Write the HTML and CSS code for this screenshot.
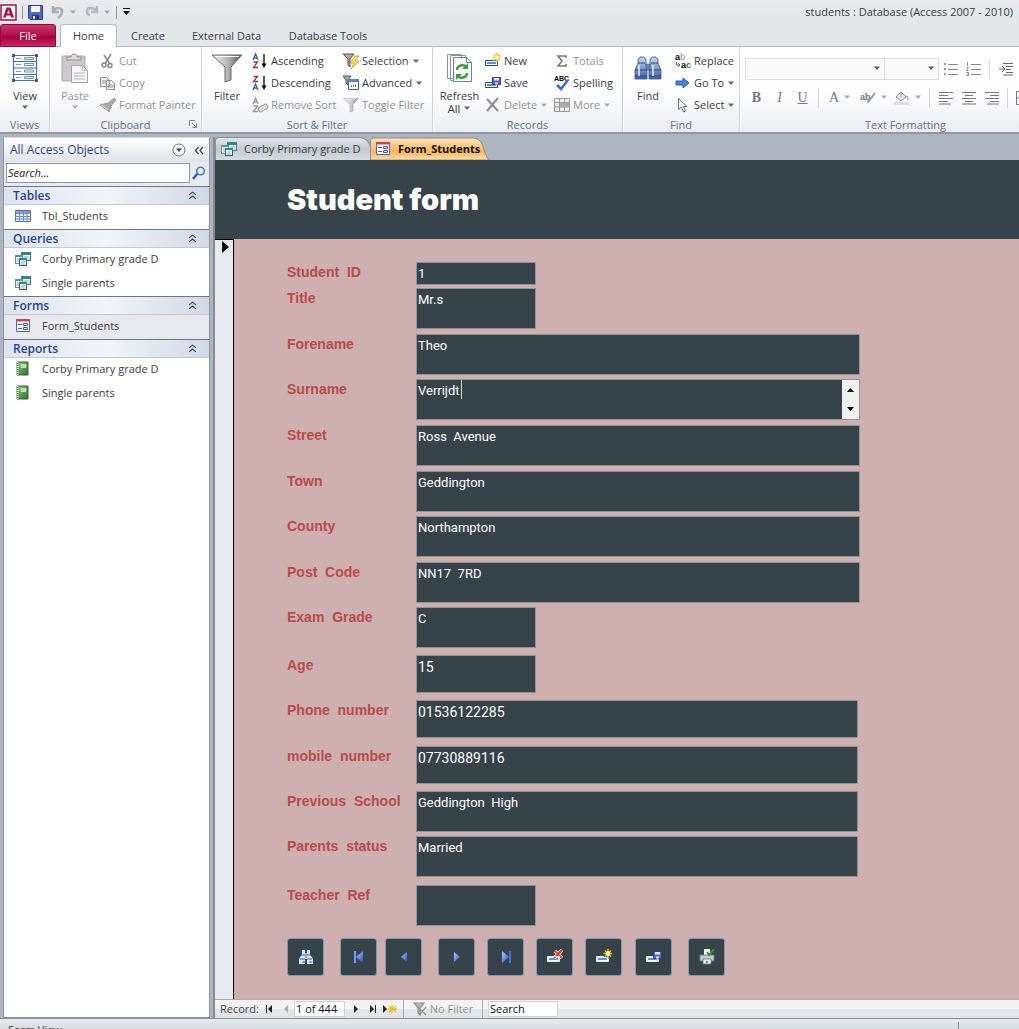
FILE: index.html
```html
<!DOCTYPE html>
<html lang="en">
<head>
<meta charset="utf-8">
<title>students : Database (Access 2007 - 2010)</title>
<link rel="stylesheet" href="styles.css">
</head>
<body>
<svg class="defs" aria-hidden="true">
  <defs>
    <linearGradient id="gFunnel"><stop offset="0" stop-color="#eee"/><stop offset=".5" stop-color="#bbb"/><stop offset="1" stop-color="#555"/></linearGradient>
    <linearGradient id="gBlue" x2="0" y2="1"><stop offset="0" stop-color="#c6d8f5"/><stop offset="1" stop-color="#3f5f9e"/></linearGradient>
    <linearGradient id="gGreen" x2="1" y2="1"><stop offset="0" stop-color="#8ccb83"/><stop offset="1" stop-color="#2f6d2c"/></linearGradient>
    <linearGradient id="gNav" x2="1" y2="1"><stop offset="0" stop-color="#b5ccff"/><stop offset="1" stop-color="#2149cf"/></linearGradient>
  </defs>
  <symbol id="query" viewBox="0 0 16 16"><rect x="6.500" y="1.500" width="9" height="8" fill="#fff" stroke="#4a7392"/><path d="M6 1h10v3H6z" fill="#2b8a87"/><rect x=".5" y="4.500" width="7" height="8" fill="#fff" stroke="#6687a4"/><path d="M0 4h8v2H0z" fill="#4a9c99"/><rect x="4.500" y="7.500" width="7" height="7" fill="#fff" stroke="#305a80"/><path d="M4 7h8v2H4z" fill="#2b8a87"/><path d="M6 11h4M6 13h4M2 8h2M2 10h2M9 6h5M13 8h2" stroke="#7da3c4"/></symbol>
  <symbol id="form" viewBox="0 0 16 16"><path d="M1.500 1.500h13v12h-13z" fill="#fff" stroke="#4a62ad"/><path d="M1 1h14v2.500H1z" fill="#c74465"/><path d="M3 6.500h4M3 10.500h4" stroke="#3e58ad"/><path d="M8.500 5.500h4v2h-4zM8.500 9.500h4v2h-4z" fill="#dce6fb" stroke="#3e58ad"/></symbol>
  <symbol id="table" viewBox="0 0 16 16"><path d="M.5 2.500h15v11H.5z" fill="#eff5ff" stroke="#50699e"/><path d="M1 3h14v2H1z" fill="#8aa6de"/><path d="M0 5.500h16M0 8.500h16M0 11h16M4.500 3v11M8.500 3v11M12 3v11" stroke="#7089b8"/></symbol>
  <symbol id="report" viewBox="0 0 16 16"><path d="M2 1h11v13H2z" fill="url(#gGreen)" stroke="#34632f"/><path d="M6 3.500h5v3H6z" fill="#b8e2ae" stroke="#e2f5de" stroke-width=".6"/><path d="M2.500 1v13" stroke="#dfe9dd" stroke-width="2" stroke-dasharray="1 1"/></symbol>
  <symbol id="funnel" viewBox="0 0 32 30"><path d="M1 2h30L20 14v13l-6 2V14z" fill="url(#gFunnel)" stroke="#6a6a6a"/><path d="M4 3.500h24" stroke="#fff"/></symbol>
  <symbol id="record" viewBox="0 0 16 16"><path d="M.5 7.500h12v5H.5z" fill="#fff" stroke="#26488c"/><path d="M2 9h9v2H2z" fill="#5490e8"/></symbol>
  <symbol id="recordnew" viewBox="0 0 16 16"><use href="#record"/><path d="M12 0v9M7.500 4.500h9M9 1.500l6 6M15 1.500l-6 6" stroke="#e8bd25" stroke-width="1.500"/><circle cx="12" cy="4.500" r="2.200" fill="#fff69b"/></symbol>
  <symbol id="recordsave" viewBox="0 0 16 16"><use href="#record"/><path d="M7.500 2.500h8v7h-8z" fill="#5d61b7" stroke="#343b83"/><path d="M9 3h5v2.500H9zM10 7.500h3v2h-3z" fill="#dfe3ff"/></symbol>
  <symbol id="recorddel" viewBox="0 0 16 16"><use href="#record"/><path d="M8 2l7 7M15 1L7 9" stroke="#fff" stroke-width="3.500"/><path d="M8 2l7 7M15 1L7 9" stroke="#e33d26" stroke-width="2"/></symbol>
  <symbol id="binoc" viewBox="0 0 28 26"><path d="M6 2h4l1 2h1v5l1 3v12H1V15L4 8V4h1zM22 2h-4l-1 2h-1v5l-1 3v12h12V15l-3-7V4h-1z" fill="url(#gBlue)" stroke="#3b5584" stroke-width=".8"/><path d="M12 9h4v6h-4z" fill="#6b87b8" stroke="#344e7c" stroke-width=".6"/><path d="M4 8h7M17 8h7M1 15h12M15 15h12M1 21h12M15 21h12" stroke="#2d4677"/><path d="M5 10v11M19 10v11" stroke="#e6effd" stroke-width="1.500"/></symbol>
  <symbol id="chev" viewBox="0 0 8 8"><path d="M1 3.500L4 1l3 2.500M1 7l3-2.500L7 7" fill="none" stroke="#333f55"/></symbol>
  <symbol id="addrest" viewBox="0 0 8 5"><path d="M1 .5h6L4 4z" fill="currentColor"/></symbol>
  <symbol id="align" viewBox="0 0 16 14"><path d="M1 1.500h14M1 4.500h9M1 7.500h14M1 10.500h9M1 13h12" stroke="#777"/></symbol>
</svg>

<header class="titlebar">
  <svg class="applogo" viewBox="0 0 17 17" role="img" aria-label="Access"><path d="M1 1h15v15H1z" fill="#fff" stroke="#a81245" stroke-width="1.500"/><path d="M6.500 3.500h4L14 13.500h-3l-.7-2H6.500l-.7 2H3zM8.400 6L7.200 9.500h2.500z" fill="#a81245" fill-rule="evenodd"/></svg>
  <i class="qsep"></i>
  <button class="q" aria-label="Save"><svg width="15" height="15" viewBox="0 0 15 15"><path d="M.5.5h14v14H2L.5 13z" fill="#5365c5" stroke="#2c3b91"/><path d="M3 1h9v6H3z" fill="#f4f6ff"/><path d="M4 10h7v5H4z" fill="#293b80"/><path d="M5 11h2v3H5z" fill="#fff"/></svg></button>
  <button class="q undo" aria-label="Undo"><svg width="14" height="14" viewBox="0 0 14 14"><path d="M2 1v6h6M2.500 6C5 2 12 2 11 7c0 3-2 4-4 6" fill="none" stroke="#a7adb5" stroke-width="2.500"/></svg><svg class="dd" width="8" height="5"><use href="#addrest"/></svg></button>
  <button class="q" aria-label="Redo"><svg width="14" height="14" viewBox="0 0 14 14"><path d="M12 1v6H6M11.500 6C9 2 2 2 2 6c0 2 1 4 3 4" fill="none" stroke="#b3b8bf" stroke-width="2.500"/></svg><svg class="dd" width="8" height="5"><use href="#addrest"/></svg></button>
  <i class="qsep"></i>
  <button class="q" aria-label="Customize"><svg width="9" height="8" viewBox="0 0 9 8"><path d="M1 .5h7" stroke="#111"/><path d="M1 3h7L4.500 7z" fill="#111"/></svg></button>
  <span class="wintitle">students : Database (Access 2007 - 2010)</span>
</header>
<nav class="tabs" aria-label="Ribbon tabs">
  <button class="file">File</button><button class="tab on">Home</button><button class="tab t2">Create</button><button class="tab t3">External Data</button><button class="tab t4">Database Tools</button>
</nav>

<section class="ribbon" aria-label="Home">
  <div class="group g-views">
    <div class="tools"><button class="big"><svg width="26" height="28" viewBox="0 0 26 28"><path d="M1.500 1.500h23v25h-23zM1 7.500h24M1 14h24M1 20.500h24" fill="#f8fbff" stroke="#4a6ea5" stroke-width="1.200"/><path d="M12.500 3.500h9v2h-9zM12.500 9.500h9v2h-9zM12.500 16h9v2h-9zM12.500 22.500h9v2h-9z" fill="#fff" stroke="#6f90c2"/><path d="M4 4.500h5M4 10.500h5M4 17.500h5M4 23.500h5" stroke="#7d9aca"/><path d="M0 0h3v3H0zM23 0h3v3h-3zM0 25h3v3H0zM23 25h3v3h-3z" fill="#3a5a92"/></svg><span>View</span><svg class="dd" width="8" height="5"><use href="#addrest"/></svg></button></div>
    <h2>Views</h2>
  </div>
  <div class="group g-clip">
    <div class="tools">
      <button class="big" disabled><svg width="28" height="30" viewBox="0 0 28 30"><rect x="1" y="3" width="23" height="25" rx="1" fill="#ccc8cc" stroke="#aaa5aa"/><path d="M6 7V4h4c0-4 6-4 6 0h4v3z" fill="#dedede" stroke="#8d8d8d"/><path d="M10.500 12.500h11l5 5v12h-16z" fill="#f6f6f6" stroke="#a3a3a3"/><path d="M21.500 12.500v5h5M13 20h11M13 23h11M13 26h11" fill="none" stroke="#bbb"/></svg><span>Paste</span><svg class="dd" width="8" height="5"><use href="#addrest"/></svg></button>
      <div class="col c-clip">
        <button disabled><svg viewBox="0 0 16 16"><path d="M4 2l6 9M11 1L5 11" stroke="#8a8a8a" stroke-width="1.500"/><circle cx="4" cy="12" r="2" fill="none" stroke="#888" stroke-width="1.500"/><circle cx="10" cy="12.500" r="2" fill="none" stroke="#888" stroke-width="1.500"/></svg>Cut</button>
        <button disabled><svg viewBox="0 0 16 16"><path d="M.5 2.500h6l3 3v6h-9zM6.500 5.500h5l3 3v6h-8z" fill="#eee" stroke="#909090"/><path d="M2 6h4M2 8h4M8 10h5M8 12h5" stroke="#999"/></svg>Copy</button>
        <button disabled><svg viewBox="0 0 16 16"><path d="M14 1l2 2-5 6-3-3zM7 6l4 4-2 5-9-7z" fill="#aaa" stroke="#888" stroke-width=".7"/><path d="M2 8l6 5" stroke="#eee"/></svg>Format Painter</button>
      </div>
    </div>
    <h2>Clipboard</h2>
    <svg class="launcher" width="8" height="8" viewBox="0 0 8 8"><path d="M.5 6V.5H6M3 3l4 4M7.500 3.500v4h-4" fill="none" stroke="#888"/></svg>
  </div>
  <div class="group g-sort">
    <div class="tools">
      <button class="big"><svg width="32" height="30"><use href="#funnel"/></svg><span>Filter</span></button>
      <div class="col c-sort">
        <button><svg viewBox="0 0 16 16"><path d="M1 7l2.500-6L6 7M2 5h3" fill="none" stroke="#3c5fa8" stroke-width="1.300"/><path d="M1.500 9h4l-4 5.500h4.500" fill="none" stroke="#a02e3b" stroke-width="1.300"/><path d="M12 1v12" stroke="#000" stroke-width="1.300"/><path d="M9.500 10.500h5L12 15z"/></svg>Ascending</button>
        <button><svg viewBox="0 0 16 16"><path d="M1.500 1.500h4l-4 5h4.500" fill="none" stroke="#a02e3b" stroke-width="1.300"/><path d="M1 15l2.500-6L6 15M2 13h3" fill="none" stroke="#3c5fa8" stroke-width="1.300"/><path d="M12 1v12" stroke="#000" stroke-width="1.300"/><path d="M9.500 10.500h5L12 15z"/></svg>Descending</button>
        <button disabled><svg viewBox="0 0 16 16"><path d="M1 7l2.500-6L6 7M2 5h3M1.500 9h4l-4 5.500h4.500" fill="none" stroke="#999" stroke-width="1.300"/><rect x="6" y="8.500" width="10" height="5" rx="2" transform="rotate(-30 11 11)" fill="#ddd" stroke="#999"/></svg>Remove Sort</button>
      </div>
      <div class="col c-filter">
        <button><svg viewBox="0 0 16 16"><path d="M0 1h11L7 6v8L5 12V6z" fill="#aaa" stroke="#555"/><path d="M12 3L7 10h4l-3 6 8-8h-4l4-5z" fill="#ffe164" stroke="#b98e1e" stroke-width=".7"/></svg>Selection<svg class="dd" viewBox="0 0 8 5"><use href="#addrest"/></svg></button>
        <button><svg viewBox="0 0 16 16"><path d="M0 1h8L5 5v5L3 8V5z" fill="#aaa" stroke="#555"/><path d="M5.500 5.500h10v9h-10z" fill="#fff" stroke="#365fa8"/><path d="M5 4h11v3H5z" fill="#4b83da"/><path d="M8 11h1M10 11h1M12 11h1" stroke="#27477e" stroke-width="1.500"/></svg>Advanced<svg class="dd" viewBox="0 0 8 5"><use href="#addrest"/></svg></button>
        <button disabled><svg viewBox="0 0 32 32"><use href="#funnel" opacity=".65"/></svg>Toggle Filter</button>
      </div>
    </div>
    <h2>Sort &amp; Filter</h2>
  </div>
  <div class="group g-rec">
    <div class="tools">
      <button class="big refresh"><svg width="27" height="30" viewBox="0 0 27 30"><path d="M1.500 1.500h14v24h-14zM4.500 2.500h15v25h-15z" fill="#fff" stroke="#8192ac"/><path d="M7.500 4.500h13l5 5v19h-18z" fill="#fff" stroke="#6b7e9c"/><path d="M20.500 4.500v5h5" fill="none" stroke="#6b7e9c"/><path d="M11 17c0-5 7-6 9-3M21 20c0 5-7 6-9 3" fill="none" stroke="#37a338" stroke-width="2.500"/><path d="M22 10v6h-6zM10 27v-6h6z" fill="#37a338"/></svg><span>Refresh<br>All <svg class="dd" width="8" height="5"><use href="#addrest"/></svg></span></button>
      <div class="col c-rec">
        <button><svg viewBox="0 0 16 16"><use href="#recordnew"/></svg>New</button>
        <button><svg viewBox="0 0 16 16"><use href="#recordsave"/></svg>Save</button>
        <button disabled><svg viewBox="0 0 16 16"><path d="M2 2l11 12M13 1L2 14" stroke="#8c8c8c" stroke-width="2"/></svg>Delete<svg class="dd" viewBox="0 0 8 5"><use href="#addrest"/></svg></button>
      </div>
      <div class="col c-tot">
        <button disabled><svg viewBox="0 0 16 16"><path d="M12 5V3H4l4 5-4 5h8v-2" fill="none" stroke="#777" stroke-width="1.500"/></svg>Totals</button>
        <button><svg viewBox="0 0 16 16"><text x="0" y="6" font-size="7" font-weight="700">ABC</text><path d="M3 10l4 4 7-9" fill="none" stroke="#3c6cc7" stroke-width="2.500"/></svg>Spelling</button>
        <button disabled><svg viewBox="0 0 16 16"><path d="M.5 1.500h15v13H.5z" fill="#eee" stroke="#999"/><path d="M0 5.500h16M0 10h16M5.500 1v13M10.500 1v13" stroke="#999"/><path d="M6 6h9v4H6z" fill="#aaa"/></svg>More<svg class="dd" viewBox="0 0 8 5"><use href="#addrest"/></svg></button>
      </div>
    </div>
    <h2>Records</h2>
  </div>
  <div class="group g-find">
    <div class="tools">
      <button class="big"><svg width="28" height="30" viewBox="0 0 28 26"><use href="#binoc"/></svg><span>Find</span></button>
      <div class="col c-find">
        <button><svg viewBox="0 0 16 16"><text x="0" y="7" font-size="9" font-weight="700">a<tspan fill="#aaa">b</tspan></text><text x="6" y="15" font-size="9" font-weight="700">a<tspan fill="#22862c">c</tspan></text><path d="M1.500 9v3h3M3 10l2 2-2 2" fill="none" stroke="#3a68b4"/></svg>Replace</button>
        <button><svg viewBox="0 0 16 16"><path d="M1 6h7V3l6 5-6 5v-3H1z" fill="#4a83e2" stroke="#2f5bab"/></svg>Go To<svg class="dd" viewBox="0 0 8 5"><use href="#addrest"/></svg></button>
        <button><svg viewBox="0 0 16 16"><path d="M3.500 1.500v11l3-2.500 2 5 2-1-2-4.500h3.500z" fill="#fff" stroke="#4b6791"/></svg>Select<svg class="dd" viewBox="0 0 8 5"><use href="#addrest"/></svg></button>
      </div>
    </div>
    <h2>Find</h2>
  </div>
  <div class="group g-text">
    <div class="fmt">
      <button class="combo font" disabled aria-label="Font"><svg class="dd" viewBox="0 0 8 5"><use href="#addrest"/></svg></button><button class="combo size" disabled aria-label="Font size"><svg class="dd" viewBox="0 0 8 5"><use href="#addrest"/></svg></button>
      <button class="fb" disabled aria-label="Bullets"><svg viewBox="0 0 16 14"><path d="M5 2.500h10M5 7.500h10M5 12.500h10" stroke="#888"/><path d="M1 1h2v2H1zM1 6h2v2H1zM1 11h2v2H1z" fill="#999"/></svg></button>
      <button class="fb" disabled aria-label="Numbering"><svg viewBox="0 0 16 14"><path d="M5 2.500h10M5 7.500h10M5 12.500h10M1.500 0v4M.5 5.500h2l-2 3h2M.5 10.500h2v3h-2M1 12h1" fill="none" stroke="#888"/></svg></button>
      <i class="fsep"></i>
      <button class="fb" disabled aria-label="Indent"><svg viewBox="0 0 16 14"><path d="M1 7h5M5 1.500h10M8 4.500h7M8 7.500h5M8 10.500h7M5 13h10M4 4l3 3-3 3" fill="none" stroke="#666"/></svg></button>
    </div>
    <div class="fmt two">
      <button class="fb serif" disabled><b>B</b></button><button class="fb serif" disabled><em>I</em></button><button class="fb serif" disabled><u>U</u></button>
      <i class="fsep"></i>
      <button class="fb serif color" disabled>A<svg class="dd" viewBox="0 0 8 5"><use href="#addrest"/></svg></button>
      <button class="fb color" disabled aria-label="Highlight"><svg viewBox="0 0 16 14"><text x="0" y="9" font-size="9" font-weight="700" fill="#777">ab</text><path d="M15 2l-6 8-2 1" fill="none" stroke="#999" stroke-width="2"/></svg><svg class="dd" viewBox="0 0 8 5"><use href="#addrest"/></svg></button>
      <button class="fb color" disabled aria-label="Fill"><svg viewBox="0 0 16 14"><path d="M2 6l5-5 5 5-5 4zM7 1v5M12 5c2 0 2 2 2 4" fill="#eee" stroke="#888"/><path d="M0 11h15v3H0z" fill="#ddd"/></svg><svg class="dd" viewBox="0 0 8 5"><use href="#addrest"/></svg></button>
      <i class="fsep"></i>
      <button class="fb" disabled aria-label="Left"><svg viewBox="0 0 16 14"><use href="#align"/></svg></button><button class="fb" disabled aria-label="Center"><svg viewBox="0 0 16 14"><path d="M1 1.500h14M4 4.500h8M1 7.500h14M4 10.500h8M1 13h14" stroke="#777"/></svg></button><button class="fb" disabled aria-label="Right"><svg viewBox="0 0 16 14"><path d="M1 1.500h14M6 4.500h9M1 7.500h14M6 10.500h9M3 13h12" stroke="#777"/></svg></button>
      <i class="fsep"></i>
      <button class="fb" disabled aria-label="Gridlines"><svg viewBox="0 0 16 14"><path d="M.5.5h15v13H.5zM0 7h16M8 0v14" fill="none" stroke="#777"/></svg></button>
    </div>
    <h2>Text Formatting</h2>
  </div>
</section>

<main class="work">
  <aside class="pane">
    <div class="panehead"><h1>All Access Objects</h1><button aria-label="Filter objects"><svg width="14" height="14" viewBox="0 0 14 14"><circle cx="7" cy="7" r="6" fill="#f7f8fa" stroke="#6c7480"/><path d="M4 5.500h6L7 9z" fill="#444"/></svg></button><button class="shut" aria-label="Collapse pane"><svg width="10" height="9" viewBox="0 0 10 9"><path d="M4.500 1L1.500 4.500l3 3.500M9 1L6 4.500 9 8" fill="none" stroke="#3d4654" stroke-width="1.300"/></svg></button></div>
    <div class="panesearch"><input type="text" placeholder="Search..." aria-label="Search objects"><button aria-label="Search"><svg width="14" height="14" viewBox="0 0 14 14"><path d="M1 13l5-6" stroke="#2d5fb8" stroke-width="2.500"/><circle cx="8.500" cy="5" r="3.800" fill="#e8f4ff" stroke="#3c7bd0" stroke-width="1.500"/></svg></button></div>
    <h3>Tables<svg><use href="#chev"/></svg></h3>
    <a href="#"><svg><use href="#table"/></svg>Tbl_Students</a>
    <h3>Queries<svg><use href="#chev"/></svg></h3>
    <a href="#"><svg><use href="#query"/></svg>Corby Primary grade D</a>
    <a href="#"><svg><use href="#query"/></svg>Single parents</a>
    <h3>Forms<svg><use href="#chev"/></svg></h3>
    <a href="#" class="sel"><svg><use href="#form"/></svg>Form_Students</a>
    <h3>Reports<svg><use href="#chev"/></svg></h3>
    <a href="#"><svg><use href="#report"/></svg>Corby Primary grade D</a>
    <a href="#"><svg><use href="#report"/></svg>Single parents</a>
  </aside>
  <section class="doc">
    <div class="doctabs"><button class="dt"><svg><use href="#query"/></svg>Corby Primary grade D</button><button class="dt active"><svg class="edge" viewBox="0 0 120 23" preserveAspectRatio="none" aria-hidden="true"><defs><linearGradient id="gTab" x2="0" y2="1"><stop offset="0" stop-color="#ffe6bd"/><stop offset=".4" stop-color="#fdc67c"/><stop offset=".6" stop-color="#f9b35c"/><stop offset="1" stop-color="#ffdf9e"/></linearGradient></defs><path d="M.5 23V4q0-3 3-3H103q6 0 9 6l4 11q1 4 4 5z" fill="url(#gTab)" stroke="#8a8f99"/></svg><svg><use href="#form"/></svg><b>Form_Students</b></button></div>
    <div class="formhead"><h1>Student form</h1></div>
    <div class="formbody">
      <div class="selector"><svg width="7" height="12" viewBox="0 0 7 12"><path d="M0 0l7 6-7 6z"/></svg></div>
      <form class="detail">
        <div class="fields">
          <label for="f1">Student&nbsp; ID</label><input id="f1" class="n low" value="1">
          <label for="f2">Title</label><textarea id="f2" class="n">Mr.s</textarea>
          <label for="f3">Forename</label><textarea id="f3">Theo</textarea>
          <label for="f4">Surname</label><div class="editing"><textarea id="f4">Verrijdt</textarea><i class="caret"></i><div class="scroll"><button type="button" aria-label="Up"><svg width="7" height="4" viewBox="0 0 7 4"><path d="M0 4h7L3.500 0z"/></svg></button><button type="button" aria-label="Down"><svg width="7" height="4" viewBox="0 0 7 4"><path d="M0 0h7L3.500 4z"/></svg></button></div></div>
          <label for="f5">Street</label><textarea id="f5">Ross  Avenue</textarea>
          <label for="f6">Town</label><textarea id="f6">Geddington</textarea>
          <label for="f7">County</label><textarea id="f7">Northampton</textarea>
          <label for="f8">Post&nbsp; Code</label><textarea id="f8">NN17  7RD</textarea>
          <label for="f9">Exam&nbsp; Grade</label><textarea id="f9" class="n">C</textarea>
          <label for="f10">Age</label><textarea id="f10" class="n mid num">15</textarea>
          <label for="f11">Phone&nbsp; number</label><textarea id="f11" class="w mid num">01536122285</textarea>
          <label for="f12">mobile&nbsp; number</label><textarea id="f12" class="w mid num">07730889116</textarea>
          <label for="f13">Previous&nbsp; School</label><textarea id="f13" class="w">Geddington  High</textarea>
          <label for="f14">Parents&nbsp; status</label><textarea id="f14" class="w">Married</textarea>
          <label for="f15">Teacher&nbsp; Ref</label><textarea id="f15" class="n"></textarea>
        </div>
        <div class="actions">
          <button type="button" aria-label="Find"><svg viewBox="0 0 16 16"><path d="M4 1h3v3h2V1h3v4l3 5v5H9v-5H7v5H1v-5l3-5z" fill="#dce9ff"/><path d="M3 6h4M9 6h4M2 10h5M9 10h5M4 13h3M11 13h3M8 2v7" stroke="#355a9a"/></svg></button>
          <button type="button" aria-label="First"><svg viewBox="0 0 16 16"><path d="M4 2v12" stroke="#739aff" stroke-width="2"/><path d="M12 2v12L5 8z" fill="url(#gNav)"/></svg></button>
          <button type="button" aria-label="Previous"><svg viewBox="0 0 16 16"><path d="M11 3v10L5 8z" fill="url(#gNav)"/></svg></button>
          <button type="button" aria-label="Next"><svg viewBox="0 0 16 16"><path d="M5 3v10l6-5z" fill="url(#gNav)"/></svg></button>
          <button type="button" aria-label="Last"><svg viewBox="0 0 16 16"><path d="M4 2v12l7-6z" fill="url(#gNav)"/><path d="M12 2v12" stroke="#496fe8" stroke-width="2"/></svg></button>
          <button type="button" aria-label="Delete record"><svg viewBox="0 0 16 16"><path d="M0 7h13v6H0z" fill="#fff"/><use href="#recorddel"/><path d="M.5 7.500h12v5H.5z" fill="none" stroke="#dfe9ff"/></svg></button>
          <button type="button" aria-label="Add record"><svg viewBox="0 0 16 16"><use href="#recordnew"/><path d="M8 7.500H.5v5h12v-3" fill="none" stroke="#dfe9ff"/></svg></button>
          <button type="button" aria-label="Save record"><svg viewBox="0 0 16 16"><use href="#recordsave"/><path d="M7 7.500H.5v5h12v-2" fill="none" stroke="#dfe9ff"/></svg></button>
          <button type="button" aria-label="Print"><svg viewBox="0 0 16 16"><path d="M5 0h6v7H5z" fill="#fff"/><path d="M1 6h14v6H1z" fill="#c8cdd0" stroke="#737a80"/><path d="M4 10h8v5H4z" fill="#fff" stroke="#6f787e"/><path d="M7 12h2v2H7z" fill="#4080dc"/><path d="M8 3l2 3 5-6" fill="none" stroke="#319b2b" stroke-width="2"/></svg></button>
        </div>
      </form>
    </div>
    <div class="recnav">
      <span class="rl">Record:</span>
      <button aria-label="First record"><svg viewBox="0 0 8 8"><path d="M1 0h1v8H1zM7 0v8L3 4z"/></svg></button>
      <button aria-label="Previous record" disabled><svg viewBox="0 0 8 8"><path d="M6 0v8L2 4z"/></svg></button>
      <input class="pos" value="1 of 444" aria-label="Current record">
      <button aria-label="Next record"><svg viewBox="0 0 8 8"><path d="M2 0v8l4-4z"/></svg></button>
      <button aria-label="Last record"><svg viewBox="0 0 8 8"><path d="M1 0v8l4-4zM6 0h1v8H6z"/></svg></button>
      <button aria-label="New record"><svg class="newr" viewBox="0 0 14 8"><path d="M0 0v8l4-4z"/><path d="M9 0v8M5 4h9M6 1l7 6M13 1L6 7" stroke="#f0bc20" stroke-width="1.300"/></svg></button>
      <button class="nofilter" disabled><svg viewBox="0 0 14 14"><path d="M1 1h10L7 6v7L5 11V6zM4 4l9 9M13 5l-6 7" fill="#bbb" stroke="#8c8c8c" stroke-width="1.200"/></svg>No Filter</button>
      <input class="recsearch" value="Search" aria-label="Search records">
    </div>
  </section>
</main>
<footer class="status"><span>Form View</span><i></i></footer>
</body>
</html>
```
FILE: styles.css
```css
* { box-sizing: border-box; }
body { margin: 0; height: 100vh; overflow: hidden; display: flex; flex-direction: column; background: #e4e8eb; color: #3b3b3b; font: 11px/16px "Open Sans", "Noto Sans", sans-serif; }
button { font: inherit; color: inherit; background: none; border: 0; padding: 0; margin: 0; white-space: nowrap; }
input, textarea { font: inherit; margin: 0; border-radius: 0; }
h1, h2, h3 { margin: 0; font-size: 11px; font-weight: 400; }
button:disabled { color: #929292; }
.defs { position: absolute; width: 0; height: 0; }
.dd { width: 8px; height: 5px; flex: none; color: #666; }
button:disabled .dd { color: #aaa; }

.titlebar { flex: none; height: 24px; display: flex; align-items: center; gap: 6px; background: linear-gradient(#e9ebee, #e3e7ea); }
.applogo { width: 17px; height: 17px; }
.qsep { width: 1px; height: 13px; background: #8e949c; margin: 0 -1px; }
.q { display: flex; align-items: center; gap: 4px; }
.q .dd { color: #a4a9af; }
.q + .q { margin-left: 2px; }
.wintitle { margin-left: auto; padding-right: 6px; }

.tabs { flex: none; height: 23px; display: flex; border-bottom: 1px solid #b5b9bf; }
.tabs button { height: 23px; border-radius: 3px 3px 0 0; }
.file { width: 56px; color: #fff; background: linear-gradient(#c8386b, #b30c4b 50%, #9c0538 55%, #d4206a); border: 1px solid #8d0a3a; }
.tabs .on { width: 57px; margin-left: 4px; background: #fff; border: 1px solid #b5b9bf; border-bottom: 0; }
.t2 { width: 62px; }
.t3 { width: 95px; }
.t4 { width: 108px; }

.ribbon { flex: none; height: 87px; display: flex; overflow: hidden; background: linear-gradient(#fff, #fdfdfe 60%, #e9ecf0); border-bottom: 2px solid #8f97a3; }
.group { flex: none; position: relative; display: flex; flex-direction: column; border-right: 1px solid #cfd3d8; box-shadow: 1px 0 #fff; }
.g-views { width: 50px; }
.g-clip { width: 152px; }
.g-sort { width: 231px; }
.g-rec { width: 190px; }
.g-find { width: 117px; }
.g-text { width: 332px; }
.tools { display: flex; height: 70px; }
.group h2 { margin-top: auto; height: 15px; text-align: center; color: #69707b; }
.big { width: 50px; flex: none; display: flex; flex-direction: column; align-items: center; padding-top: 6px; line-height: 13px; }
.big > svg:first-child { height: 30px; margin-bottom: 6px; }
.big > .dd { margin-top: 3px; }
.big span .dd { margin-bottom: 2px; }
.refresh { padding-left: 3px; }
.col { padding-top: 3px; }
.col button { display: flex; align-items: center; height: 22px; gap: 3px; }
.col button > svg:first-child { width: 16px; height: 16px; flex: none; }
.ribbon svg { overflow: visible; }
.ribbon svg text { font-family: "Liberation Sans", sans-serif; }
.c-sort { width: 91px; }
.c-rec, .c-find { padding-left: 2px; }
.c-rec { width: 71px; }
.launcher { position: absolute; right: 4px; bottom: 4px; }
.fmt { display: flex; align-items: center; padding: 10px 0 0 5px; height: 33px; }
.two { padding-top: 2px; }
.combo { height: 22px; border: 1px solid #dcdfe3; background: #fafafa; display: flex; align-items: center; justify-content: flex-end; padding-right: 3px; }
.combo:disabled .dd { color: #555; }
.font { width: 140px; }
.size { width: 54px; border-left: 0; }
.fb { width: 23px; height: 20px; flex: none; display: flex; align-items: center; justify-content: center; gap: 4px; color: #777; }
.fb > svg:not(.dd) { width: 16px; height: 14px; flex: none; }
.color { width: 34px; }
.serif:disabled { font: 14px/16px "Liberation Serif", serif; color: #777; }
.fsep { flex: none; width: 1px; height: 20px; background: #d5d8dc; margin: 0 4px; }

.work { flex: 1; min-height: 0; display: flex; padding: 3px 0 0 3px; background: #aeb5c1; }
.pane { flex: none; width: 207px; background: #fff; border: 1px solid #8b94a1; border-top-color: #d8dce2; }
.panehead { display: flex; align-items: center; height: 24px; padding: 0 5px 0 6px; gap: 8px; background: linear-gradient(#fff, #dfe3e8); }
.panehead h1 { flex: 1; font-size: 12px; line-height: 18px; color: #2c4593; }
.panehead button, .panesearch button { display: flex; }
.panesearch { display: flex; height: 24px; align-items: center; gap: 2px; padding: 0 3px 3px 2px; background: #e7eaee; }
.panesearch input { flex: 1; min-width: 0; height: 20px; border: 1px solid #8e959e; padding: 0 1px; background: #fff; }
.panesearch input::placeholder { color: #222; font-style: italic; opacity: 1; }
.pane h3 { display: flex; align-items: center; justify-content: space-between; height: 19px; padding: 0 12px 0 9px; border-top: 1px solid #6f7780; border-bottom: 1px solid #c2c7d1; font-size: 12px; font-weight: 600; color: #1f4590; background: linear-gradient(90deg, #dfe3ee, #f2f5f9 50%, #d2d8e5); }
.pane h3 svg { width: 9px; height: 9px; }
.pane a { display: flex; align-items: center; gap: 11px; height: 24px; padding: 0 0 2px 11px; color: #3b3b3b; text-decoration: none; }
.pane a svg { width: 16px; height: 16px; }
.pane .sel { background: #e7e9ee; }

.doc { flex: 1; min-width: 0; display: flex; flex-direction: column; margin-left: 3px; border-left: 2px solid #858c98; }
.doctabs { flex: none; display: flex; height: 23px; }
.dt { position: relative; display: flex; align-items: center; gap: 7px; width: 156px; padding-left: 5px; background: linear-gradient(#e3e6ea, #c4c9d1 50%, #d7dbe0); border: 1px solid #8a919c; border-bottom: 0; border-radius: 4px 12px 0 0; }
.dt svg { position: relative; width: 16px; height: 16px; flex: none; }
.dt b { position: relative; color: #111; font-weight: 700; }
.active { width: 120px; border: 0; background: none; margin-left: -1px; }
.dt .edge { position: absolute; inset: 0; width: 120px; height: 23px; }
.formhead { flex: none; height: 79px; padding: 0 72px; display: flex; align-items: center; background: #364348; }
.formhead h1 { font: 900 29px/32px Inter, "Liberation Sans", sans-serif; color: #fff; }
.formbody { flex: 1; min-height: 0; display: flex; background: #cfb0b0; }
.selector { flex: none; width: 19px; background: #e7eaef; border: solid #000; border-width: 1px 1px 0 0; padding: 1px 0 0 7px; }
.detail { flex: 1; padding: 23px 0 0 53px; }
.fields { display: grid; grid-template-columns: 129px 444px; grid-template-rows: 26px 46px 45px 46px 46px 45px 46px 45px 48px 45px 46px 45px 45px 49px 40px; align-items: start; }
.fields label { font: bold 14px/20px "Liberation Sans", sans-serif; color: #b94a4b; }
.fields textarea, .fields input { display: block; width: 444px; height: 41px; padding: 1px 1px 0; border: 1px solid #8f9492; background: #364348; color: #fff; font: 13px/20px Roboto, "Open Sans", sans-serif; resize: none; overflow: hidden; }
.fields .n { width: 120px; }
.fields .w { width: 442px; }
.fields .mid { height: 38px; }
.fields .low { height: 23px; padding-top: 0; }
.fields .num { font-size: 14px; }
.editing { position: relative; }
.caret { position: absolute; left: 45px; top: 1px; width: 1px; height: 19px; background: #d8dccb; }
.scroll { position: absolute; right: 1px; top: 1px; width: 17px; height: 39px; background: #f0f0f0; display: flex; flex-direction: column; }
.scroll button { flex: 1; display: flex; align-items: center; justify-content: center; }
.actions { display: grid; grid-template-columns: 53px 45px 53px 49px 49px 49px 50px 53px 37px; margin-top: 13px; }
.actions button { width: 37px; height: 38px; display: flex; align-items: center; justify-content: center; background: #364348; border: 1px solid #8097ad; border-radius: 3px; }
.actions svg { width: 16px; height: 16px; }
.recnav { flex: none; height: 19px; display: flex; align-items: center; padding-left: 5px; color: #444; background: linear-gradient(#f3f5f4 50%, #e3e6e9 50%); border-top: 1px solid #a6a9ad; }
.rl { width: 40px; }
.recnav button { width: 17px; display: flex; justify-content: center; }
.recnav button svg { width: 8px; height: 8px; fill: #222; }
.recnav button:disabled svg { fill: #aaa; }
.recnav input { height: 16px; border: 1px solid #d0d3d6; padding: 0 1px; background: #fff; color: #111; }
.pos { width: 51px; margin-right: 2px; }
.recnav button .newr { width: 14px; }
.recnav .nofilter { width: 80px; height: 18px; margin: 0 5px; align-items: center; gap: 3px; border: solid #a9aeb5; border-width: 0 1px; }
.recnav .nofilter svg { width: 14px; height: 14px; }
.recsearch { width: 70px; }

.status { flex: none; height: 22px; margin-bottom: -11px; display: flex; justify-content: space-between; padding: 3px 60px 0 8px; border-top: 1px solid #858c96; background: linear-gradient(#e8ebee, #c8ced4); }
.status i { width: 1px; background: #858c96; }
```
